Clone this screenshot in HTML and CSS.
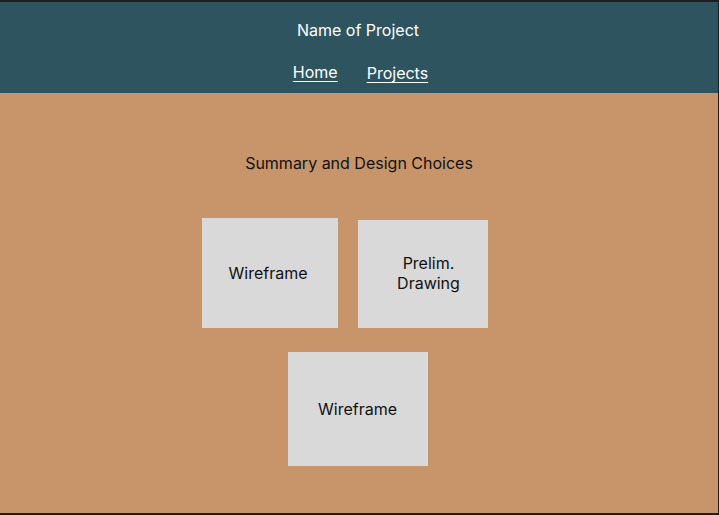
FILE: index.html
```html
<!DOCTYPE html>
<html lang="en">
<head>
<meta charset="utf-8">
<title>Name of Project</title>
<link rel="stylesheet" href="styles.css">
</head>
<body>
<div class="page">
  <header class="header">
    <div class="title">Name of Project</div>
    <nav class="nav">
      <a href="#" class="nav-link">Home</a>
      <a href="#" class="nav-link">Projects</a>
    </nav>
  </header>
  <main class="main">
    <h1 class="summary">Summary and Design Choices</h1>
    <div class="row">
      <div class="card card-a">Wireframe</div>
      <div class="card card-b">Prelim.<br>Drawing</div>
    </div>
    <div class="card card-c">Wireframe</div>
  </main>
</div>
</body>
</html>
```

FILE: styles.css
```css
html, body {
  margin: 0;
  padding: 0;
  background: #1e1e1e;
}
body {
  font-family: Inter, "Noto Sans", sans-serif;
  font-size: 16px;
}
.page {
  box-sizing: border-box;
  width: 719px;
  height: 515px;
  border-top: 2px solid #1e1e1e;
  border-right: 1px solid #1e1e1e;
  border-bottom: 2px solid #1e1e1e;
  display: flex;
  flex-direction: column;
}
.header {
  height: 91px;
  background: #2e5460;
  color: #ffffff;
  display: flex;
  flex-direction: column;
  align-items: center;
  box-sizing: border-box;
  padding-top: 19px;
}
.title {
  font-size: 16px;
  line-height: 19px;
  padding-right: 2px;
}
.nav {
  display: flex;
  gap: 29px;
  margin-top: 23px;
  padding-left: 3px;
}
.nav-link {
  color: #ffffff;
  font-size: 16px;
  line-height: 19px;
  text-decoration: underline;
  text-underline-offset: 3px;
}
.nav-link + .nav-link {
  margin-top: 1px;
}
.main {
  flex: 1;
  background: #c8956a;
  display: flex;
  flex-direction: column;
  align-items: center;
  padding-top: 61px;
}
.summary {
  margin: 0;
  font-size: 16px;
  font-weight: 400;
  line-height: 19px;
  color: #111111;
}
.row {
  display: flex;
  align-items: flex-start;
  gap: 20px;
  margin-top: 45px;
  margin-right: 29px;
}
.card {
  background: #d9d9d9;
  color: #111111;
  font-size: 16px;
  line-height: 20px;
  display: flex;
  align-items: center;
  justify-content: center;
  text-align: center;
  box-sizing: border-box;
}
.card-a {
  width: 136px;
  height: 110px;
  padding-right: 3px;
}
.card-b {
  width: 130px;
  height: 108px;
  margin-top: 2px;
  padding-left: 12px;
  padding-bottom: 2px;
}
.card-c {
  width: 140px;
  height: 114px;
  margin-top: 24px;
  margin-right: 3px;
}
```
